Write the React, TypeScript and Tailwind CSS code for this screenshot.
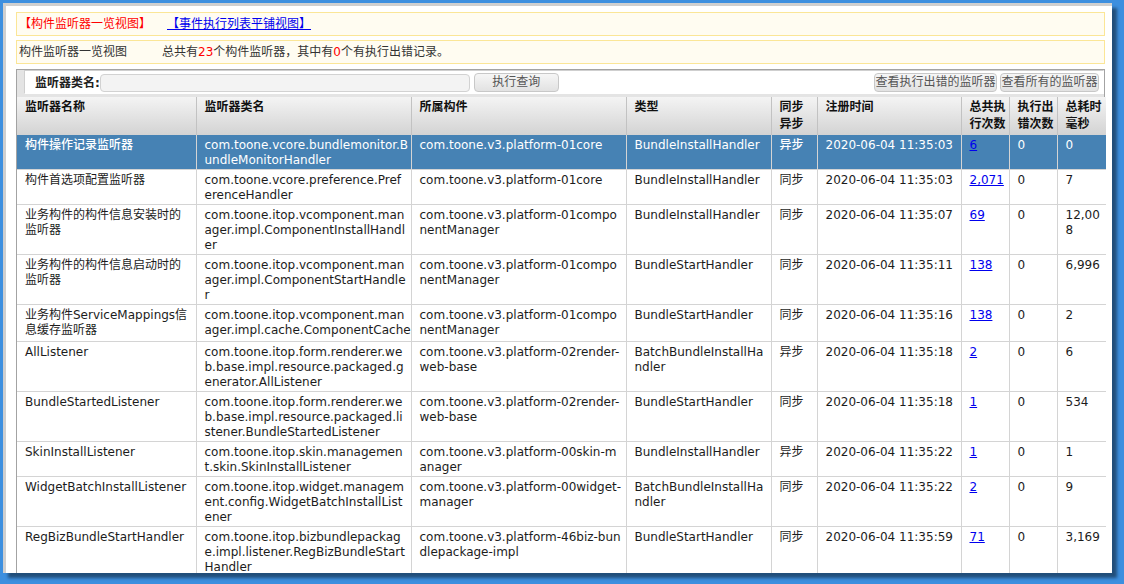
import React from "react";

// Each column's text is kept as written lines, the way the grid wraps them.
type Row = {
  name: string;
  cls: string;
  bundle: string;
  kind: string;
  mode: string;
  time: string;
  count: string;
  errors: string;
  ms: string;
  selected?: boolean;
  tall?: boolean;
};

const ROWS: Row[] = [
  {
    name: "构件操作记录监听器",
    cls: "com.toone.vcore.bundlemonitor.B\nundleMonitorHandler",
    bundle: "com.toone.v3.platform-01core",
    kind: "BundleInstallHandler",
    mode: "异步",
    time: "2020-06-04 11:35:03",
    count: "6",
    errors: "0",
    ms: "0",
    selected: true,
  },
  {
    name: "构件首选项配置监听器",
    cls: "com.toone.vcore.preference.Pref\nerenceHandler",
    bundle: "com.toone.v3.platform-01core",
    kind: "BundleInstallHandler",
    mode: "同步",
    time: "2020-06-04 11:35:03",
    count: "2,071",
    errors: "0",
    ms: "7",
  },
  {
    name: "业务构件的构件信息安装时的\n监听器",
    cls: "com.toone.itop.vcomponent.man\nager.impl.ComponentInstallHandl\ner",
    bundle: "com.toone.v3.platform-01compo\nnentManager",
    kind: "BundleInstallHandler",
    mode: "同步",
    time: "2020-06-04 11:35:07",
    count: "69",
    errors: "0",
    ms: "12,00\n8",
  },
  {
    name: "业务构件的构件信息启动时的\n监听器",
    cls: "com.toone.itop.vcomponent.man\nager.impl.ComponentStartHandle\nr",
    bundle: "com.toone.v3.platform-01compo\nnentManager",
    kind: "BundleStartHandler",
    mode: "同步",
    time: "2020-06-04 11:35:11",
    count: "138",
    errors: "0",
    ms: "6,996",
  },
  {
    name: "业务构件ServiceMappings信\n息缓存监听器",
    cls: "com.toone.itop.vcomponent.man\nager.impl.cache.ComponentCache",
    bundle: "com.toone.v3.platform-01compo\nnentManager",
    kind: "BundleStartHandler",
    mode: "同步",
    time: "2020-06-04 11:35:16",
    count: "138",
    errors: "0",
    ms: "2",
    tall: true,
  },
  {
    name: "AllListener",
    cls: "com.toone.itop.form.renderer.we\nb.base.impl.resource.packaged.g\nenerator.AllListener",
    bundle: "com.toone.v3.platform-02render-\nweb-base",
    kind: "BatchBundleInstallHa\nndler",
    mode: "异步",
    time: "2020-06-04 11:35:18",
    count: "2",
    errors: "0",
    ms: "6",
  },
  {
    name: "BundleStartedListener",
    cls: "com.toone.itop.form.renderer.we\nb.base.impl.resource.packaged.li\nstener.BundleStartedListener",
    bundle: "com.toone.v3.platform-02render-\nweb-base",
    kind: "BundleStartHandler",
    mode: "同步",
    time: "2020-06-04 11:35:18",
    count: "1",
    errors: "0",
    ms: "534",
  },
  {
    name: "SkinInstallListener",
    cls: "com.toone.itop.skin.managemen\nt.skin.SkinInstallListener",
    bundle: "com.toone.v3.platform-00skin-m\nanager",
    kind: "BundleInstallHandler",
    mode: "异步",
    time: "2020-06-04 11:35:22",
    count: "1",
    errors: "0",
    ms: "1",
  },
  {
    name: "WidgetBatchInstallListener",
    cls: "com.toone.itop.widget.managem\nent.config.WidgetBatchInstallList\nener",
    bundle: "com.toone.v3.platform-00widget-\nmanager",
    kind: "BatchBundleInstallHa\nndler",
    mode: "同步",
    time: "2020-06-04 11:35:22",
    count: "2",
    errors: "0",
    ms: "9",
  },
  {
    name: "RegBizBundleStartHandler",
    cls: "com.toone.itop.bizbundlepackag\ne.impl.listener.RegBizBundleStart\nHandler",
    bundle: "com.toone.v3.platform-46biz-bun\ndlepackage-impl",
    kind: "BundleStartHandler",
    mode: "同步",
    time: "2020-06-04 11:35:59",
    count: "71",
    errors: "0",
    ms: "3,169",
  },
];

const HEADERS = [
  "监听器名称",
  "监听器类名",
  "所属构件",
  "类型",
  "同步\n异步",
  "注册时间",
  "总共执\n行次数",
  "执行出\n错次数",
  "总耗时\n毫秒",
];

const COL_WIDTHS = [179, 215, 215, 145, 46, 144, 48, 48, 49];

function ToolButton({ label, className }: { label: string; className: string }) {
  return (
    <button
      type="button"
      className={`h-[19px] rounded-[4px] border border-[#c8c8c8] bg-gradient-to-b from-[#f6f6f6] to-[#e2e2e2] text-[12px] leading-[17px] text-[#555] ${className}`}
    >
      {label}
    </button>
  );
}

export default function App() {
  return (
    <div
      className="h-[584px] w-[1124px] overflow-hidden bg-[#3d8fdf] pl-[3px] pt-[3px] text-[12px] text-[#1c1c1c]"
      style={{ fontFamily: '"DejaVu Sans", "Noto Sans CJK SC", sans-serif' }}
    >
      <div className="h-[570px] w-[1109px] overflow-hidden border-l-[3px] border-t-[3px] border-[#cfcfcf] bg-white pl-[10px] pr-[7px] pt-[6px] shadow-[5px_5px_3px_rgba(0,0,0,0.45)]">
        <div className="flex h-[24px] items-center border border-[#fbe697] bg-[#fffcf1] pl-[2px]">
          <span className="w-[148px] text-[#ff0000]">【构件监听器一览视图】</span>
          <a href="#" className="text-[#0000ee] underline">
            【事件执行列表平铺视图】
          </a>
        </div>

        <div className="mt-[4px] flex h-[24px] items-center border border-[#fbe697] bg-[#fffcf1] pl-[2px] text-[#333]">
          <span className="w-[143px]">构件监听器一览视图</span>
          <span>
            总共有<span className="text-[#ff0000]">23</span>个构件监听器，其中有
            <span className="text-[#ff0000]">0</span>个有执行出错记录。
          </span>
        </div>

        <div className="mt-[5px] border border-[#a3a3a3] bg-[#e4e4e4]">
          <div className="pl-[8px] pt-[1px] pb-[3px]">
            <div className="flex h-[23px] items-center bg-white pl-[10px] pr-[5px] shadow-[-1px_-1px_0_#cfcfcf]">
              <span className="font-bold text-[#222]">监听器类名:</span>
              <input
                className="h-[18px] w-[370px] rounded-[4px] border border-[#d2d2d2] bg-[#f3f3f3] outline-none"
                readOnly
              />
              <ToolButton label="执行查询" className="ml-[4px] w-[85px]" />
              <div className="ml-auto flex gap-[3px]">
                <ToolButton label="查看执行出错的监听器" className="w-[123px]" />
                <ToolButton label="查看所有的监听器" className="w-[99px]" />
              </div>
            </div>
          </div>

          <table className="w-full table-fixed border-collapse bg-white">
            <colgroup>
              {COL_WIDTHS.map((w, i) => (
                <col key={i} style={{ width: w }} />
              ))}
            </colgroup>
            <thead>
              <tr className="bg-gradient-to-b from-[#f4f4f4] to-[#d3d3d3]">
                {HEADERS.map((h, i) => (
                  <th
                    key={i}
                    className="h-[38px] whitespace-pre border-r border-[#c2c2c2] pb-[2px] pl-[8px] pt-[2px] text-left align-top font-bold leading-[17px] text-[#111] last:border-r-0"
                  >
                    {h}
                  </th>
                ))}
              </tr>
            </thead>
            <tbody>
              {ROWS.map((r, i) => {
                const cells = [r.name, r.cls, r.bundle, r.kind, r.mode, r.time];
                const cellCls = `whitespace-pre overflow-hidden border-b border-r border-[#d4d4d4] pl-[8px] pt-[3px] align-top leading-[15px] ${
                  r.tall ? "pb-[3px]" : "pb-[1px]"
                } ${r.selected ? "border-[#4682b4] font-medium text-white" : ""}`;
                return (
                  <tr key={i} className={r.selected ? "bg-[#4682b4]" : ""}>
                    {cells.map((c, j) => (
                      <td key={j} className={cellCls}>
                        {c}
                      </td>
                    ))}
                    <td className={cellCls}>
                      <a href="#" className="font-normal text-[#0000ee] underline">
                        {r.count}
                      </a>
                    </td>
                    <td className={cellCls}>{r.errors}</td>
                    <td className={`${cellCls} border-r-0`}>{r.ms}</td>
                  </tr>
                );
              })}
            </tbody>
          </table>
        </div>
      </div>
    </div>
  );
}
